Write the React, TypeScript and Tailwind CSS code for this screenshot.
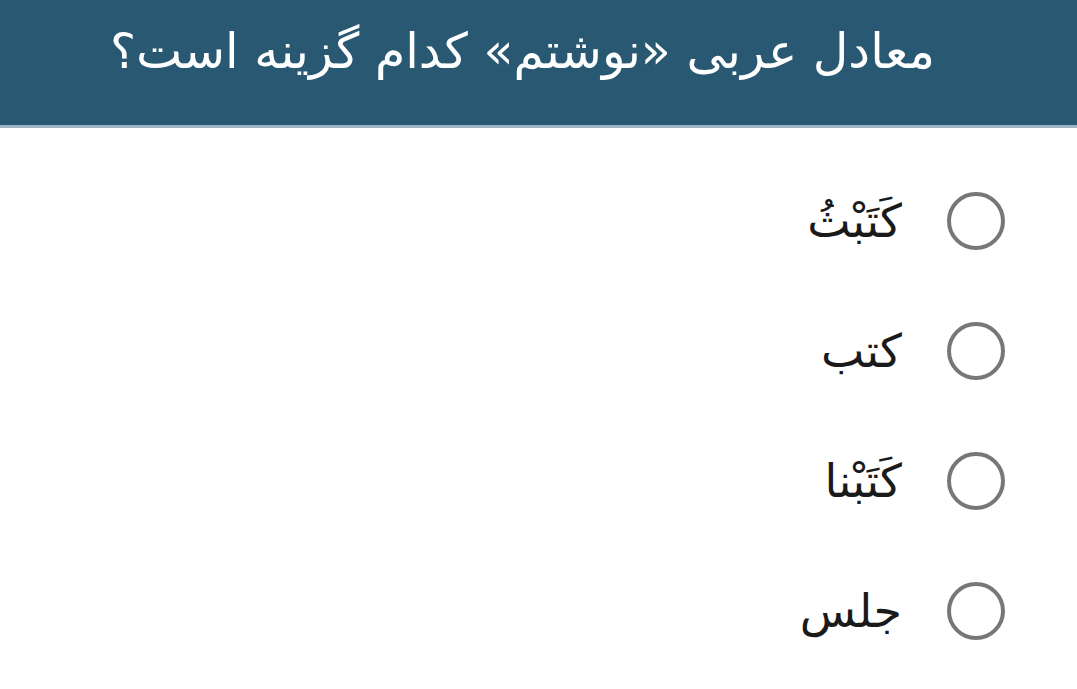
import React from 'react';

const options = ['كَتَبْثُ', 'كتب', 'كَتَبْنا', 'جلس'];

export default function App() {
  return (
    <div dir="rtl" className="w-[1077px] h-[689px] bg-white overflow-hidden" style={{ fontFamily: '"DejaVu Sans", sans-serif' }}>
      <header className="h-[128px] bg-[#285872] border-b-[3px] border-[#9bb3c2] pr-[142px] pt-[10px]">
        <h1 className="text-white text-[49px] leading-[84px]">معادل عربی «نوشتم» کدام گزینه است؟</h1>
      </header>
      <div className="flex flex-col pr-[72px] pt-[64px] gap-[72px]">
        {options.map((o) => (
          <label key={o} className="flex items-center gap-[45px] h-[58px]">
            <span className="w-[58px] h-[58px] rounded-full border-[4px] border-[#777777] shrink-0" />
            <span className="text-[46px] text-[#1a1a1a] leading-none">{o}</span>
          </label>
        ))}
      </div>
    </div>
  );
}
